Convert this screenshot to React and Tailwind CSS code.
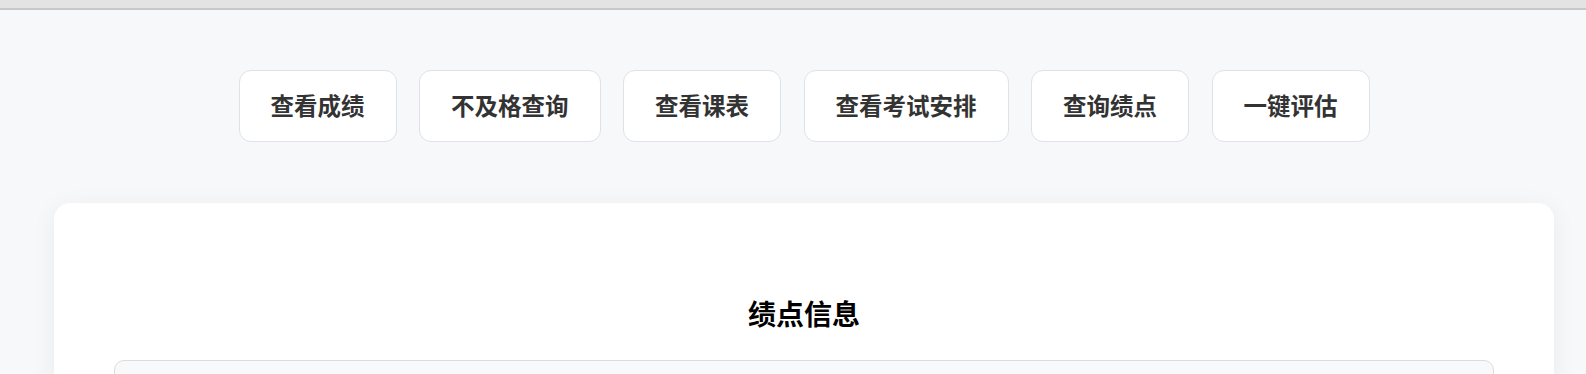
import React from "react";

const actions = ["查看成绩", "不及格查询", "查看课表", "查看考试安排", "查询绩点", "一键评估"];

const App = () => {
  return (
    <div
      className="min-h-screen bg-[#f7f8fa]"
      style={{ fontFamily: '"Noto Sans CJK SC", "Noto Sans", sans-serif' }}
    >
      {/* browser chrome strip */}
      <div className="h-[10px] bg-[#e3e3e3] border-b-2 border-[#c8c8c8]" />

      <div className="pl-[54px] pr-[32px]">
        {/* action buttons */}
        <div className="flex justify-center gap-[22.5px] pt-[60px]">
          {actions.map((label) => (
            <button
              key={label}
              className="h-[72px] px-[31px] flex items-center justify-center bg-white border border-[#dfe2e7] rounded-xl text-[23.5px] font-bold text-[#333333] leading-none"
            >
              {label}
            </button>
          ))}
        </div>

        {/* grade point card */}
        <div className="mt-[61px] bg-white rounded-2xl shadow-[0_4px_24px_rgba(0,0,0,0.06)] px-[60px] pt-[89px] pb-10">
          <h2 className="text-center text-[28px] font-bold text-black leading-[42px]">绩点信息</h2>
          <div className="mt-[26px] h-[120px] bg-[#f8f9fa] border border-[#dcdcdc] rounded-[10px]" />
        </div>
      </div>
    </div>
  );
};

export default App;
